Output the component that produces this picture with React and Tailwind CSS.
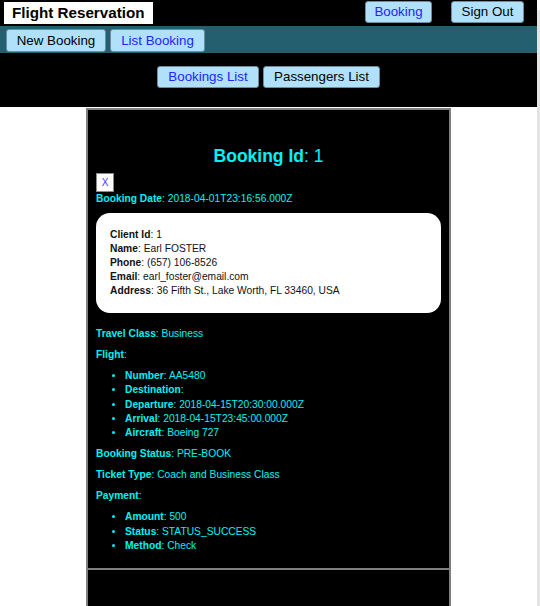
import React from 'react';

const booking = {
  id: 1,
  date: '2018-04-01T23:16:56.000Z',
  client: [
    ['Client Id', '1'],
    ['Name', 'Earl FOSTER'],
    ['Phone', '(657) 106-8526'],
    ['Email', 'earl_foster@email.com'],
    ['Address', '36 Fifth St., Lake Worth, FL 33460, USA'],
  ],
  travelClass: 'Business',
  flight: [
    ['Number', 'AA5480'],
    ['Destination', ''],
    ['Departure', '2018-04-15T20:30:00.000Z'],
    ['Arrival', '2018-04-15T23:45:00.000Z'],
    ['Aircraft', 'Boeing 727'],
  ],
  status: 'PRE-BOOK',
  ticketType: 'Coach and Business Class',
  payment: [
    ['Amount', '500'],
    ['Status', 'STATUS_SUCCESS'],
    ['Method', 'Check'],
  ],
};

function Field({ label, value }) {
  return (
    <div className="leading-[14px]">
      <span className="font-bold">{label}</span>: {value}
    </div>
  );
}

function SubList({ items }) {
  return (
    <ul className="list-disc pl-[29px] mt-[7px] mb-[7px]">
      {items.map(([label, value]) => (
        <li key={label} className="leading-[14.25px]">
          <span className="font-bold">{label}</span>: {value}
        </li>
      ))}
    </ul>
  );
}

export default function App() {
  return (
    <div className="min-h-screen bg-white flex font-['Liberation_Sans',Arial,sans-serif]">
      <div className="flex-1">
        {/* Top bar */}
        <div className="h-[26px] bg-black flex items-start justify-between">
          <div className="ml-[4px] mt-[2px] h-[22px] w-[149px] bg-white pl-[8px] text-[15.2px] font-bold leading-[22px] text-black">
            Flight Reservation
          </div>
          <div className="flex gap-[19px] mt-[1px] mr-[13px]">
            <button className="h-[22px] w-[67px] bg-[#b0e0fa] border border-[#6d8c9c] rounded-[3px] text-[13.33px] leading-none text-[#2424ff]">Booking</button>
            <button className="h-[22px] w-[73px] bg-[#b0e0fa] border border-[#6d8c9c] rounded-[3px] text-[13.33px] leading-none text-black">Sign Out</button>
          </div>
        </div>

        {/* Menu bar */}
        <div className="h-[27px] bg-[#245f6f] flex gap-[4px] pl-[6px] pt-[3px]">
          <button className="h-[23px] w-[100px] bg-[#b0e0fa] border border-[#6d8c9c] rounded-[3px] text-[13.33px] leading-none text-black">New Booking</button>
          <button className="h-[23px] w-[95px] bg-[#b0e0fa] border border-[#6d8c9c] rounded-[3px] text-[13.33px] leading-none text-[#2424ff]">List Booking</button>
        </div>

        {/* Sub menu */}
        <div className="h-[54px] bg-black flex justify-center gap-[4px] pt-[13px]">
          <button className="h-[22px] w-[102px] bg-[#b0e0fa] border border-[#6d8c9c] rounded-[3px] text-[13.33px] leading-none text-[#2424ff]">Bookings List</button>
          <button className="h-[22px] w-[117px] bg-[#b0e0fa] border border-[#6d8c9c] rounded-[3px] text-[13.33px] leading-none text-black">Passengers List</button>
        </div>

        {/* Booking panel */}
        <div className="w-[365px] mx-auto mt-[1px] bg-black border-2 border-[#808080] text-[#00f2f2] text-[10.25px]">
          <div className="p-[8px]">
            <h3 className="mt-[28px] text-center text-[17.5px] leading-[20px]">
              <span className="font-bold">Booking Id</span>: {booking.id}
            </h3>
            <button className="mt-[7px] w-[18px] h-[19px] bg-white border border-[#8a8a8a] text-[#3a3aff] text-[10px] leading-none">X</button>
            <Field label="Booking Date" value={booking.date} />

            <div className="mt-[7px] bg-white rounded-[14px] pl-[14px] py-[15px] text-[#111]">
              {booking.client.map(([label, value]) => (
                <Field key={label} label={label} value={value} />
              ))}
            </div>

            <div className="mt-[14px]">
              <Field label="Travel Class" value={booking.travelClass} />
            </div>
            <div className="mt-[7px] leading-[14px]">
              <span className="font-bold">Flight</span>:
            </div>
            <SubList items={booking.flight} />
            <Field label="Booking Status" value={booking.status} />
            <div className="mt-[7px]">
              <Field label="Ticket Type" value={booking.ticketType} />
            </div>
            <div className="mt-[7px] leading-[14px]">
              <span className="font-bold">Payment</span>:
            </div>
            <SubList items={booking.payment} />
          </div>
          <div className="h-[60px] border-t-2 border-[#808080]" />
        </div>
      </div>
      <div className="w-[3px] mt-[10px] bg-[#e4e4e4]" />
    </div>
  );
}
